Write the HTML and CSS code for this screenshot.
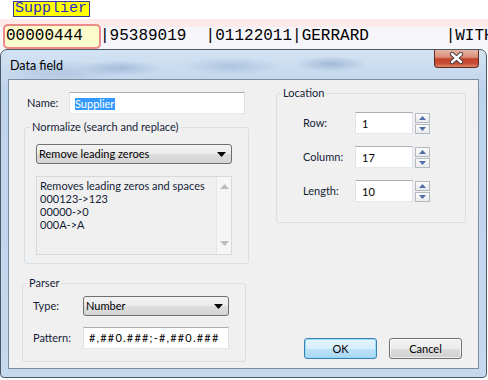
FILE: index.html
```html
<!DOCTYPE html>
<html lang="en">

<head>
    <meta http-equiv="Content-Type" content="text/html; charset=utf-8" />
    <title>Data field</title>
    <link rel="stylesheet" href="styles.css">
</head>

<body>
    <div class="caption-line"><span class="caption-tag">Supplier</span></div>
    <div class="record">
        <span class="hit">00000444</span><span class="rest">|95389019  |01122011|GERRARD        |WITH</span>
    </div>

    <div class="dialog">
        <div class="titlebar">
            <span class="title">Data field</span>
            <div class="close">
                <svg width="45" height="18" viewBox="0 0 45 18">
                    <path d="M18 5 L27 13 M27 5 L18 13" stroke="#4a3a3a" stroke-width="4.4" stroke-linecap="round" fill="none" />
                    <path d="M18 5 L27 13 M27 5 L18 13" stroke="#ffffff" stroke-width="2.4" stroke-linecap="round" fill="none" />
                </svg>
            </div>
        </div>

        <div class="client">
            <div class="col-left">
                <div class="name-row">
                    <span class="lbl">Name:</span>
                    <div class="textbox name-box"><span class="selected">Supplier</span></div>
                </div>

                <fieldset class="group normalize">
                    <legend>Normalize (search and replace)</legend>
                    <div class="group-body">
                        <div class="combo">
                            <span>Remove leading zeroes</span>
                            <svg width="9" height="5" viewBox="0 0 9 5"><path d="M0 0 H9 L4.5 5 Z" fill="#000" /></svg>
                        </div>
                        <div class="listbox">
                            <div class="list-text">
                                <div>Removes leading zeros and spaces</div>
                                <div>000123-&gt;123</div>
                                <div>00000-&gt;0</div>
                                <div>000A-&gt;A</div>
                            </div>
                            <div class="vscroll">
                                <svg width="9" height="5" viewBox="0 0 9 5"><path d="M4.5 0 L9 5 H0 Z" fill="#bcbcbc" /></svg>
                                <svg width="9" height="5" viewBox="0 0 9 5"><path d="M0 0 H9 L4.5 5 Z" fill="#bcbcbc" /></svg>
                            </div>
                        </div>
                    </div>
                </fieldset>

                <fieldset class="group parser">
                    <legend>Parser</legend>
                    <div class="group-body parser-grid">
                        <span class="lbl">Type:</span>
                        <div class="combo">
                            <span>Number</span>
                            <svg width="9" height="5" viewBox="0 0 9 5"><path d="M0 0 H9 L4.5 5 Z" fill="#000" /></svg>
                        </div>
                        <span class="lbl">Pattern:</span>
                        <div class="textbox pattern">#,##0.###;-#,##0.###</div>
                    </div>
                </fieldset>
            </div>

            <div class="col-right">
                <fieldset class="group location">
                    <legend>Location</legend>
                    <div class="group-body location-grid">
                        <span class="lbl">Row:</span>
                        <div class="textbox num">1</div>
                        <div class="spin">
                            <div class="spin-btn"><svg width="7" height="4" viewBox="0 0 7 4"><path d="M3.5 0 L7 4 H0 Z" fill="#4f6fa5" /></svg></div>
                            <div class="spin-btn"><svg width="7" height="4" viewBox="0 0 7 4"><path d="M0 0 H7 L3.5 4 Z" fill="#4f6fa5" /></svg></div>
                        </div>

                        <span class="lbl">Column:</span>
                        <div class="textbox num">17</div>
                        <div class="spin">
                            <div class="spin-btn"><svg width="7" height="4" viewBox="0 0 7 4"><path d="M3.5 0 L7 4 H0 Z" fill="#4f6fa5" /></svg></div>
                            <div class="spin-btn"><svg width="7" height="4" viewBox="0 0 7 4"><path d="M0 0 H7 L3.5 4 Z" fill="#4f6fa5" /></svg></div>
                        </div>

                        <span class="lbl">Length:</span>
                        <div class="textbox num">10</div>
                        <div class="spin">
                            <div class="spin-btn"><svg width="7" height="4" viewBox="0 0 7 4"><path d="M3.5 0 L7 4 H0 Z" fill="#4f6fa5" /></svg></div>
                            <div class="spin-btn"><svg width="7" height="4" viewBox="0 0 7 4"><path d="M0 0 H7 L3.5 4 Z" fill="#4f6fa5" /></svg></div>
                        </div>
                    </div>
                </fieldset>

                <div class="buttons">
                    <div class="btn default">OK</div>
                    <div class="btn">Cancel</div>
                </div>
            </div>
        </div>
    </div>
</body>

</html>
```

FILE: styles.css
```css
html,
body {
    margin: 0;
    padding: 0;
}

body {
    width: 488px;
    height: 380px;
    overflow: hidden;
    background: #ffffff;
    font-family: Lato, "Noto Sans", sans-serif;
    font-size: 11px;
    line-height: 14px;
    color: #141c36;
}

/* ---- record preview above the dialog ---- */

.caption-line {
    height: 19px;
    padding-left: 13px;
}

.caption-tag {
    display: inline-block;
    margin-top: 1px;
    padding: 0 2px 0 1px;
    border: 1px solid #3a3a9c;
    background: #ffff00;
    color: #2b2bd0;
    font-family: "Liberation Mono", monospace;
    font-size: 15px;
    line-height: 14px;
}

.record {
    box-sizing: border-box;
    height: 30px;
    padding: 4px 0 0 3px;
    display: flex;
    align-items: center;
    overflow: hidden;
    background: linear-gradient(#fdeaea 0 8px, #f5f5fa 8px);
    font-family: "Liberation Mono", monospace;
    font-size: 16px;
    white-space: pre;
    color: #000;
}

.hit {
    flex-shrink: 0;
    box-sizing: border-box;
    width: 98px;
    height: 25px;
    padding-left: 1px;
    border: 2px solid #ec8a8a;
    border-radius: 5px;
    background: #fbfbcb;
    line-height: 21px;
}

.rest {
    flex-shrink: 0;
    margin-left: -1px;
}

/* ---- dialog window ---- */

.dialog {
    box-sizing: border-box;
    width: 487px;
    height: 329px;
    padding: 0 7px 8px 7px;
    border: 1px solid #4d5866;
    border-radius: 7px 7px 4px 4px;
    display: flex;
    flex-direction: column;
    background:
        radial-gradient(ellipse 40px 8px at 120px 18px, rgba(120, 150, 190, 0.45), transparent),
        radial-gradient(ellipse 50px 9px at 230px 16px, rgba(120, 150, 190, 0.35), transparent),
        radial-gradient(ellipse 36px 8px at 330px 14px, rgba(110, 140, 180, 0.45), transparent),
        radial-gradient(ellipse 60px 12px at 60px 22px, rgba(140, 165, 200, 0.35), transparent),
        linear-gradient(#d3e3f3, #bed4ec 40px, #c5d9ee);
}

.titlebar {
    height: 29px;
    display: flex;
    justify-content: space-between;
    align-items: flex-start;
}

.title {
    margin: 8px 0 0 2px;
    color: #000;
    font-size: 12.5px;
    line-height: 15px;
}

.close {
    width: 45px;
    height: 18px;
    box-sizing: border-box;
    border: 1px solid #5e2c22;
    border-top: none;
    border-radius: 0 0 4px 4px;
    background: linear-gradient(#e6b3a3 0%, #dc8f7a 42%, #c3432a 52%, #c64d35 78%, #e18468 100%);
}

.close svg {
    display: block;
    margin: -1px 0 0 -1px;
}

.client {
    flex: 1;
    display: grid;
    grid-template-columns: 227px 189px;
    column-gap: 27px;
    padding: 6px 13px 6px 13px;
    border: 1px solid #7d8b9c;
    background: #f0f0f0;
}

.textbox {
    box-sizing: border-box;
    border: 1px solid;
    border-color: #abadb3 #dbdfe6 #e3e9ef #e2e3ea;
    background: #ffffff;
    color: #000;
}

/* ---- left column ---- */

.name-row {
    margin-top: 6px;
    height: 22px;
    display: flex;
    align-items: center;
    padding-left: 5px;
}

.name-row .lbl {
    width: 42px;
}

.name-box {
    width: 176px;
    height: 22px;
    padding: 4px 0 0 5px;
}

.selected {
    display: inline-block;
    height: 12px;
    line-height: 12px;
    padding: 0 1px 0 0;
    background: #3399ff;
    color: #ffffff;
}

.group {
    margin: 0;
    padding: 0;
    border: 1px solid #d5dfe5;
    border-radius: 3px;
    min-width: 0;
}

.group legend {
    padding: 0 2px;
    margin-left: 4px;
    line-height: 14px;
}

.normalize {
    margin: 6px 0 0 2px;
    width: 225px;
    box-sizing: border-box;
}

.normalize legend {
    margin-left: 5px;
}

.normalize .group-body {
    padding: 10px 0 8px 11px;
}

.combo {
    box-sizing: border-box;
    height: 20px;
    padding: 0 5px 0 2px;
    display: flex;
    align-items: center;
    justify-content: space-between;
    border: 1px solid #707070;
    border-radius: 3px;
    background: linear-gradient(#f3f3f3, #ebebeb 50%, #dddddd 51%, #d4d4d4);
    color: #000;
}

.normalize .combo {
    width: 196px;
}

.listbox {
    box-sizing: border-box;
    width: 196px;
    height: 79px;
    margin-top: 12px;
    display: flex;
    justify-content: space-between;
    border: 1px solid #d9d9d9;
    background: #f0f0f0;
}

.list-text {
    padding: 2px 0 0 3px;
    line-height: 13px;
    white-space: nowrap;
}

.vscroll {
    flex-shrink: 0;
    width: 15px;
    display: flex;
    flex-direction: column;
    justify-content: space-between;
    align-items: center;
    padding: 7px 0 8px;
    box-sizing: border-box;
    border-left: 1px solid #e6e6e6;
    background: #f6f6f6;
}

.vscroll svg {
    display: block;
}

.parser {
    margin-top: 12px;
    width: 224px;
    box-sizing: border-box;
}

.parser-grid {
    display: grid;
    grid-template-columns: 50px 146px;
    row-gap: 11px;
    align-items: center;
    padding: 6px 0 12px 10px;
}

.pattern {
    height: 22px;
    padding: 3px 0 0 5px;
    letter-spacing: 1.2px;
    white-space: nowrap;
}

/* ---- right column ---- */

.col-right {
    display: flex;
    flex-direction: column;
}

.location {
    width: 190px;
    box-sizing: border-box;
}

.location-grid {
    display: grid;
    grid-template-columns: 52px 58px 15px;
    column-gap: 0;
    row-gap: 12px;
    align-items: center;
    padding: 12px 0 20px 26px;
}

.num {
    height: 22px;
    padding: 4px 0 0 6px;
}

.spin {
    margin-left: 2px;
    display: flex;
    flex-direction: column;
    gap: 1px;
}

.spin-btn {
    box-sizing: border-box;
    width: 15px;
    height: 10px;
    display: flex;
    align-items: center;
    justify-content: center;
    border: 1px solid #b4b8c0;
    background: linear-gradient(#fbfbfb, #e9eaec);
}

.spin-btn svg {
    display: block;
}

.buttons {
    margin: auto 3px 3px 0;
    display: flex;
    justify-content: flex-end;
    gap: 12px;
}

.btn {
    box-sizing: border-box;
    width: 73px;
    height: 21px;
    display: flex;
    align-items: center;
    justify-content: center;
    border: 1px solid #707070;
    border-radius: 3px;
    background: linear-gradient(#f2f2f2, #ebebeb 50%, #dddddd 51%, #cfcfcf);
    box-shadow: inset 0 0 0 1px rgba(255, 255, 255, 0.7);
    color: #000;
}

.btn.default {
    border-color: #3c7fb1;
    background: linear-gradient(#e5f4fc, #d6eefb 50%, #bee3f8 51%, #a9d7f3);
    box-shadow: inset 0 0 0 1px rgba(140, 220, 250, 0.9);
}
```
